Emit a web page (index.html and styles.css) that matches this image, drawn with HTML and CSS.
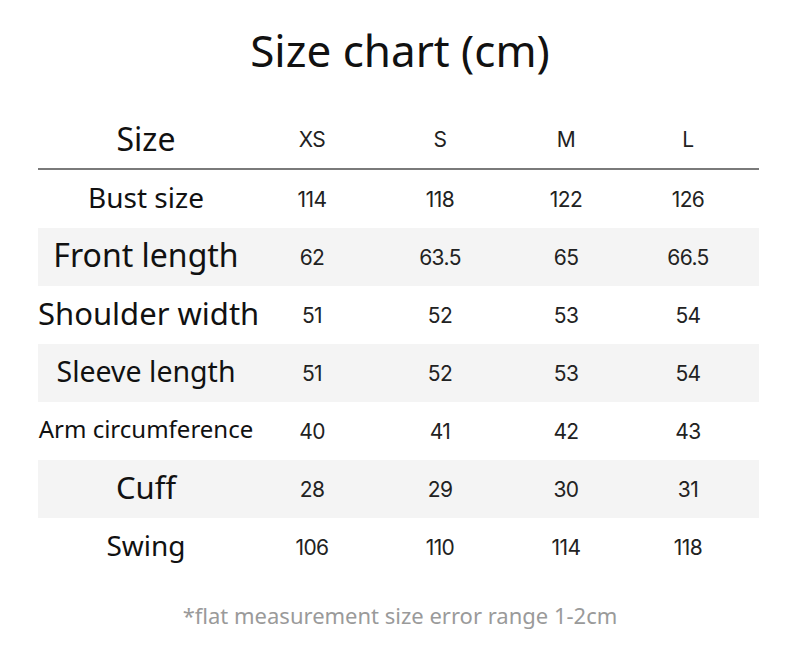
FILE: index.html
```html
<!DOCTYPE html>
<html>
<head>
<meta charset="utf-8">
<link rel="stylesheet" href="styles.css">
</head>
<body>
<div class="page">
  <h1 class="title">Size chart (cm)</h1>
  <div class="chart">
    <div class="row head">
      <div class="label l-size">Size</div>
      <div class="val">XS</div><div class="val">S</div><div class="val">M</div><div class="val last">L</div>
    </div>
    <div class="row">
      <div class="label l-bust">Bust size</div>
      <div class="val">114</div><div class="val">118</div><div class="val">122</div><div class="val last">126</div>
    </div>
    <div class="row shade">
      <div class="label l-front">Front length</div>
      <div class="val">62</div><div class="val">63.5</div><div class="val">65</div><div class="val last">66.5</div>
    </div>
    <div class="row">
      <div class="label l-shoulder">Shoulder width</div>
      <div class="val">51</div><div class="val">52</div><div class="val">53</div><div class="val last">54</div>
    </div>
    <div class="row shade">
      <div class="label l-sleeve">Sleeve length</div>
      <div class="val">51</div><div class="val">52</div><div class="val">53</div><div class="val last">54</div>
    </div>
    <div class="row">
      <div class="label l-arm">Arm circumference</div>
      <div class="val">40</div><div class="val">41</div><div class="val">42</div><div class="val last">43</div>
    </div>
    <div class="row shade">
      <div class="label l-cuff">Cuff</div>
      <div class="val">28</div><div class="val">29</div><div class="val">30</div><div class="val last">31</div>
    </div>
    <div class="row">
      <div class="label l-swing">Swing</div>
      <div class="val">106</div><div class="val">110</div><div class="val">114</div><div class="val last">118</div>
    </div>
  </div>
  <p class="note">*flat measurement size error range 1-2cm</p>
</div>
</body>
</html>
```

FILE: styles.css
```css
html, body {
  margin: 0;
  padding: 0;
  background: #ffffff;
}
.page {
  width: 800px;
  height: 661px;
  font-family: "Noto Sans", "Open Sans", sans-serif;
  color: #111111;
}
.title {
  margin: 0;
  padding-top: 20px;
  height: 90px;
  line-height: 60px;
  font-size: 44px;
  font-weight: 400;
  text-align: center;
  box-sizing: border-box;
}
.chart {
  margin-left: 38px;
  width: 721px;
}
.row {
  display: grid;
  grid-template-columns: 216px 116px 140px 112px 1fr;
  align-items: center;
  height: 58px;
}
.row.head {
  margin-top: 20px;
  border-bottom: 2px solid #7a7a7a;
}
.row.shade {
  background: #f4f4f4;
}
.label {
  text-align: center;
  white-space: nowrap;
  line-height: 1;
  padding-bottom: 4px;
}
.val {
  text-align: center;
  font-family: "Inter", "Liberation Sans", sans-serif;
  font-size: 21px;
  color: #222222;
  letter-spacing: -0.6px;
}
.val.last {
  padding-right: 5px;
}
.l-size { font-size: 32px; padding-bottom: 0; }
.l-bust { font-size: 28px; }
.l-front { font-size: 32px; }
.l-shoulder { font-size: 31px; }
.l-sleeve { font-size: 28.5px; }
.l-arm { font-size: 24px; }
.l-cuff { font-size: 31px; }
.l-swing { font-size: 28px; }
.note {
  margin: 24px 0 0;
  line-height: 30px;
  font-size: 22px;
  color: #9a9a9a;
  text-align: center;
}
```
